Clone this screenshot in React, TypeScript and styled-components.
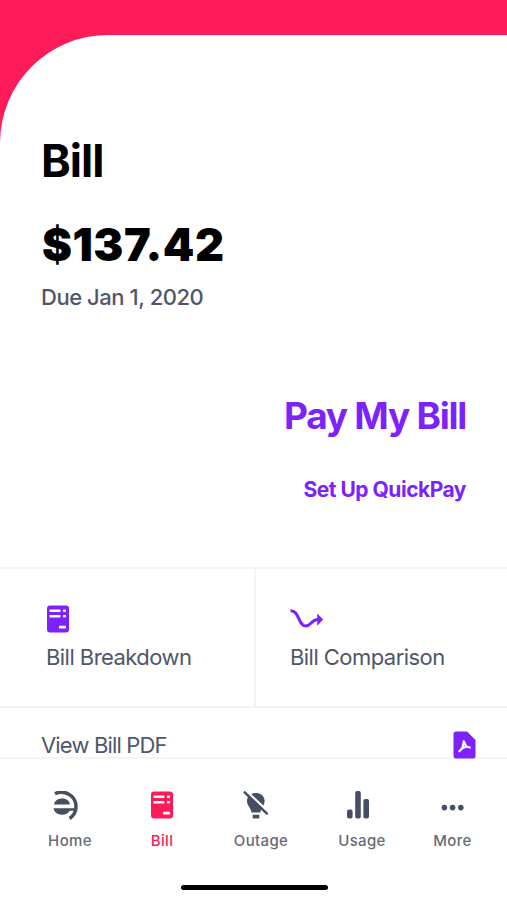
import React from "react";
import styled, { createGlobalStyle } from "styled-components";

const PINK = "#ff1a58";
const PURPLE = "#7d22fb";
const SLATE = "#505669";
const LINE = "#f4f4f5";

const GlobalStyle = createGlobalStyle`
  *, *::before, *::after { box-sizing: border-box; }
  body { margin: 0; background: #fff; font-family: Inter, "Liberation Sans", sans-serif; }
  p, h1, h2 { margin: 0; }
  button { border: 0; padding: 0; background: none; font: inherit; text-align: left; }
  svg { display: block; }
`;

const Screen = styled.div`
  display: flex;
  flex-direction: column;
  width: 507px;
  height: 900px;
  overflow: hidden;
  padding-top: 34.5px;
  background: linear-gradient(${PINK} 0 160px, #fff 160px);
`;

const Sheet = styled.main`
  display: flex;
  flex-direction: column;
  height: 722.5px;
  background: #fff;
  border-top-left-radius: 108px;
`;

const Summary = styled.section`
  display: flex;
  flex-direction: column;
  height: 532.5px;
  padding: 98px 41px 0 41px;
`;

const Text = styled.p<{ $size: number; $line: number; $weight: number; $track: number; $color?: string }>`
  font-size: ${(p) => p.$size}px;
  line-height: ${(p) => p.$line}px;
  font-weight: ${(p) => p.$weight};
  letter-spacing: ${(p) => p.$track}px;
  color: ${(p) => p.$color ?? "#000"};
  white-space: nowrap;
`;

const Amount = styled(Text)`
  margin-top: 28.5px;
  padding-left: 1px;
`;

const DueDate = styled(Text)`
  margin-top: 10px;
`;

const Actions = styled.div`
  display: flex;
  flex-direction: column;
  align-items: flex-end;
  gap: 36px;
  margin-top: 81px;
`;

const Options = styled.section`
  display: grid;
  grid-template-columns: 256px 1fr;
  height: 141px;
  border-top: 2px solid ${LINE};
  border-bottom: 2px solid ${LINE};
`;

const Option = styled.button<{ $inset: number; $divided?: boolean }>`
  display: flex;
  flex-direction: column;
  gap: 10px;
  padding: 36px 0 0 ${(p) => p.$inset}px;
  border-right: ${(p) => (p.$divided ? `2px solid ${LINE}` : "0")};
`;

const PdfRow = styled.section`
  display: flex;
  justify-content: space-between;
  height: 49px;
  padding: 23px 31px 0 41px;
`;

const PdfBadge = styled.span`
  position: relative;
  z-index: 1;
`;

const TabBar = styled.nav`
  display: grid;
  grid-template-columns: 92px 92px 106px 96px 85px;
  height: 128px;
  flex: none;
  padding-left: 24px;
  border-top: 2px solid ${LINE};
`;

const Tab = styled.button<{ $active?: boolean; $shift?: number }>`
  display: flex;
  flex-direction: column;
  align-items: center;
  gap: 10px;
  padding-top: 32px;
  color: ${(p) => (p.$active ? PINK : "#464e61")};
  svg { transform: translateX(${(p) => p.$shift ?? 0}px); }
`;

const TabLabel = styled.span<{ $active?: boolean }>`
  font-size: 15px;
  line-height: 20px;
  font-weight: 500;
  letter-spacing: 0.35px;
  color: ${(p) => (p.$active ? PINK : "#666b74")};
`;

const HomeIndicator = styled.div`
  flex: none;
  align-self: center;
  width: 147px;
  height: 5px;
  margin-left: 2px;
  border-radius: 3px;
  background: #000;
`;

const BillIcon = ({ color = "currentColor", height = 28 }: { color?: string; height?: number }) => (
  <svg width="24" height={height} viewBox={`0 0 24 ${height}`} fill={color}>
    <rect x="1" y=".5" width="22" height="27" rx="3" />
    <g fill="#fff">
      <rect x="3.5" y="4.5" width="11" height="2.6" rx=".6" />
      <rect x="17" y="4.5" width="3" height="2.6" rx=".8" />
      <rect x="3.5" y="10" width="11" height="2.6" rx=".6" />
      <rect x="17" y="10" width="3" height="2.6" rx=".8" />
      <rect x="13" y="20.8" width="7" height="2.6" rx=".6" />
    </g>
  </svg>
);

const CompareIcon = () => (
  <svg width="34" height="28" viewBox="0 0 34 28" fill="none">
    <path d="M.5 5.8C9.5 5.5 8.2 21 15.8 21C21.5 21 21 14.6 28 14.6" stroke={PURPLE} strokeWidth="3" />
    <path d="M27.2 8.4L33.2 14.6L27.2 20.8Z" fill={PURPLE} />
  </svg>
);

const PdfIcon = () => (
  <svg width="23" height="28" viewBox="0 0 23 28">
    <path d="M3 .5H14L22.5 9V25Q22.5 27.5 20 27.5H3Q.5 27.5 .5 25V3Q.5 .5 3 .5Z" fill={PURPLE} />
    <path d="M10.8 10.3L13.3 15.6L16.8 16.6M13.3 15.6L9.3 17.2L6.3 20.3M9.3 17.2L10.8 10.3" fill="none" stroke="#fff" strokeWidth="2.1" strokeLinecap="round" strokeLinejoin="round" />
  </svg>
);

const HomeIcon = () => (
  <svg width="26" height="30" viewBox="0 0 26 30">
    <path d="M2 2.8C11-1.8 23 4.2 23 15.3C23 21 20.5 25 16.6 27.5" fill="none" stroke="currentColor" strokeWidth="3.5" />
    <path d="M1.1 13.4C2.2 5.5 15.9 5.4 17 13.4ZM.5 17.2H22.5L21.5 19.7H16.8C13.8 25.1 4.3 25.1 1.3 19.7Z" fill="currentColor" />
  </svg>
);

const OutageIcon = () => (
  <svg width="26" height="30" viewBox="0 0 26 30">
    <path d="M5 9.3C6-.3 21.5-.4 22.6 9.3C22.9 14.3 19.3 16 18.4 21.4H9.5C8.7 16.5 4.5 14.2 5 9.3Z" fill="currentColor" />
    <path d="M10.7 23.8H17.3V26.5Q17.3 27.5 16.3 27.5H11.7Q10.7 27.5 10.7 26.5Z" fill="currentColor" />
    <path d="M3.5 0L25.8 20.8" stroke="#fff" strokeWidth="3.2" />
    <path d="M2.7 1.4L25 22.7" stroke="currentColor" strokeWidth="2.5" strokeLinecap="round" />
  </svg>
);

const UsageIcon = () => (
  <svg width="24" height="30" viewBox="0 0 24 30" fill="currentColor">
    <rect x="1" y="18.5" width="5.6" height="9" rx="2" />
    <rect x="9.2" y="0" width="5.6" height="27.5" rx="2" />
    <rect x="17.4" y="8" width="5.6" height="19.5" rx="2" />
  </svg>
);

const MoreIcon = () => (
  <svg width="24" height="30" viewBox="0 0 24 30" fill="currentColor">
    <circle cx="3.4" cy="16.6" r="2.8" />
    <circle cx="11.6" cy="16.6" r="2.8" />
    <circle cx="19.8" cy="16.6" r="2.8" />
  </svg>
);

const tabs = [
  { label: "Home", icon: <HomeIcon />, shift: -4 },
  { label: "Bill", icon: <BillIcon height={30} />, active: true },
  { label: "Outage", icon: <OutageIcon />, shift: -6 },
  { label: "Usage", icon: <UsageIcon />, shift: -4 },
  { label: "More", icon: <MoreIcon /> },
];

export default function App() {
  return (
    <>
      <GlobalStyle />
      <Screen>
        <Sheet>
          <Summary>
            <Text as="h1" $size={45} $line={56} $weight={700} $track={-1}>Bill</Text>
            <Amount $size={45} $line={56} $weight={900} $track={0.5}>$137.42</Amount>
            <DueDate $size={22} $line={28} $weight={500} $track={-0.45} $color={SLATE}>Due Jan 1, 2020</DueDate>
            <Actions>
              <Text as="button" $size={37} $line={48} $weight={650} $track={-1.25} $color={PURPLE}>Pay My Bill</Text>
              <Text as="button" $size={21} $line={28} $weight={650} $track={-0.5} $color={PURPLE}>Set Up QuickPay</Text>
            </Actions>
          </Summary>
          <Options>
            <Option $inset={46} $divided>
              <BillIcon color={PURPLE} />
              <Text as="span" $size={22} $line={28} $weight={400} $track={-0.55} $color={SLATE}>Bill Breakdown</Text>
            </Option>
            <Option $inset={34}>
              <CompareIcon />
              <Text as="span" $size={22} $line={28} $weight={400} $track={-0.55} $color={SLATE}>Bill Comparison</Text>
            </Option>
          </Options>
          <PdfRow>
            <Text $size={22} $line={28} $weight={400} $track={-0.85} $color={SLATE}>View Bill PDF</Text>
            <PdfBadge><PdfIcon /></PdfBadge>
          </PdfRow>
        </Sheet>
        <TabBar>
          {tabs.map((tab) => (
            <Tab key={tab.label} $active={tab.active} $shift={tab.shift}>
              {tab.icon}
              <TabLabel $active={tab.active}>{tab.label}</TabLabel>
            </Tab>
          ))}
        </TabBar>
        <HomeIndicator />
      </Screen>
    </>
  );
}
